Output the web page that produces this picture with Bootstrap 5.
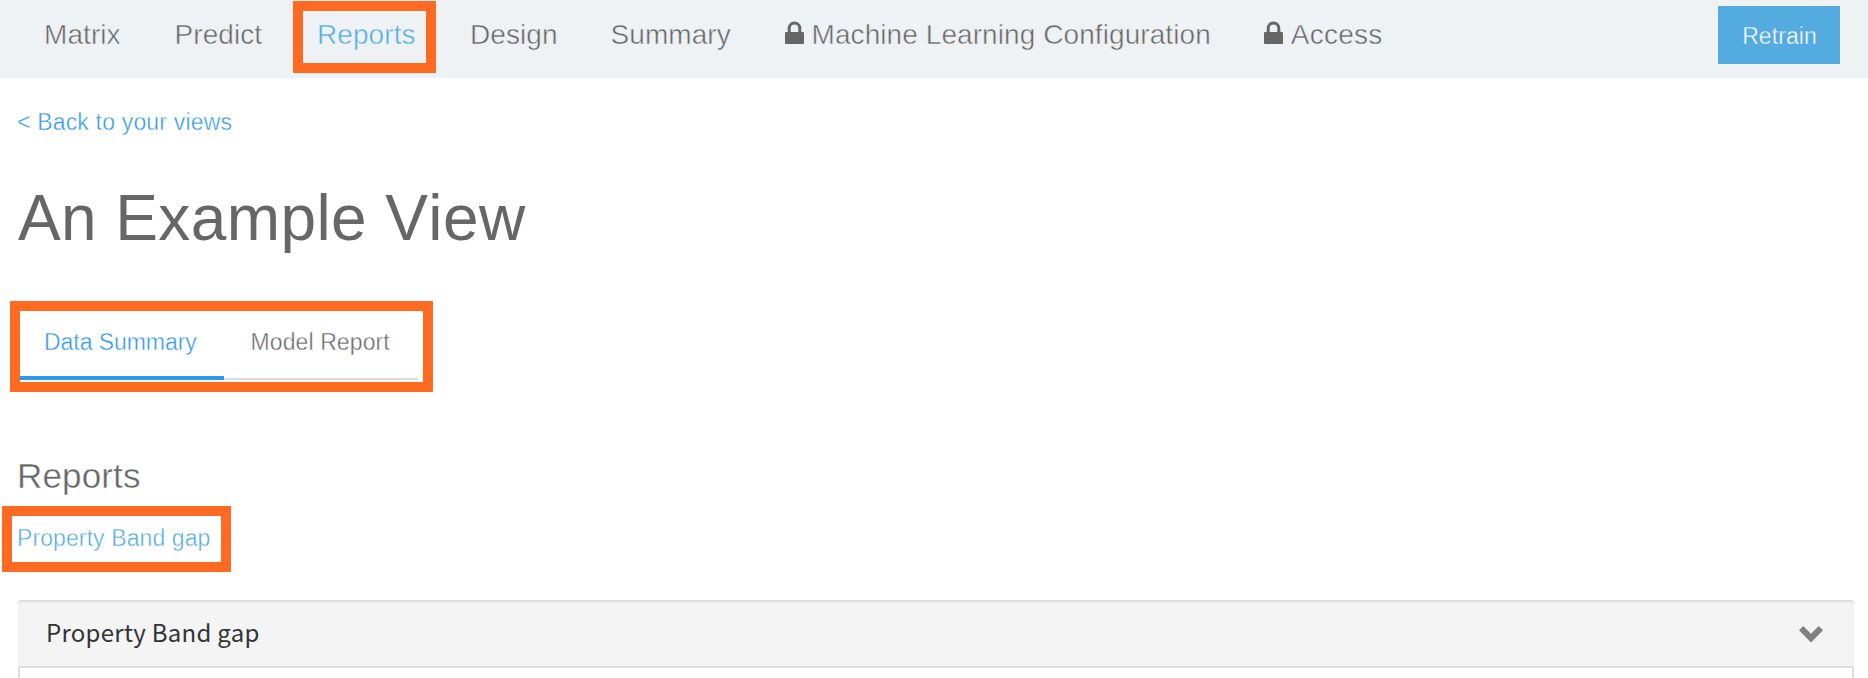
<!DOCTYPE html>
<html lang="en">
<head>
<meta charset="utf-8">
<title>An Example View</title>
<meta name="viewport" content="width=device-width, initial-scale=1">
<link href="https://cdn.jsdelivr.net/npm/bootstrap@5.3.0/dist/css/bootstrap.min.css" rel="stylesheet">
<style>
  :root { --ink: #666; --sky: #54abe0; --link: #2f97ec; --hot: #fe6a22; --bar: #eef2f5; }
  body { font-family: "Liberation Sans", Arial, sans-serif; color: var(--ink); height: 678px; overflow: hidden; background: #fff; }
  a { text-decoration: none; color: inherit; }
  /* a hairline in the surface colour slims the strokes to a light weight */
  .thin { -webkit-text-stroke: .4px #fff; font-size: 23px; line-height: 28px; white-space: nowrap; }
  .topbar { height: 78px; background: var(--bar); padding: 0 28px 0 44px; }
  .topbar .thin { -webkit-text-stroke: .5px var(--bar); font-size: 28px; line-height: 32px; letter-spacing: .08px; }
  .topbar .nav-item { padding-top: 19px; }
  .w1 { width: 130.5px; } .w2 { width: 142.5px; } .w3 { width: 153px; } .w4 { width: 140.5px; } .w5 { width: 174.5px; } .w6 { width: 479.3px; }
  .topbar .w7 { letter-spacing: .25px; }
  .lock { width: 19px; height: 23px; margin: 2px 7.5px 0 0; flex: none; }
  .sky { color: var(--sky); }
  .linkblue { color: var(--link); }
  .topbar .retrain.thin { width: 122px; height: 58px; margin-top: 6px; background: var(--sky); color: #fff; border-radius: 0; border: 0; padding: 2px 0 0 1px; -webkit-text-stroke: .4px var(--sky); font-size: 23px; line-height: 28px; }
  .callout { position: relative; }
  .callout::after { content: ""; position: absolute; border: 10px solid var(--hot); pointer-events: none; }
  .c-nav::after { left: -24px; top: 1px; width: 143px; height: 72px; }
  .c-tabs::after { left: -8px; top: 0; width: 423px; height: 91px; }
  .c-link::after { left: -15px; top: -18px; width: 229px; height: 66px; }
  .page { height: 600px; padding: 30px 14px 0 17px; }
  .back { letter-spacing: .18px; }
  h1.title { font-size: 64px; line-height: 72px; font-weight: 400; letter-spacing: .4px; margin: 46px 0 0 1px; font-kerning: none; }
  .tabs { width: 400px; height: 79px; margin: 47px 0 0 1px; }
  .tabs a { padding-top: 27px; height: 79px; }
  .tab-on { width: 206px; padding-left: 26px; letter-spacing: -.05px; border-bottom: 4px solid var(--link); }
  .tab-off { width: 194px; padding-left: 26.5px; border-bottom: 2px solid #ddd; letter-spacing: .1px; }
  h2.thin { font-size: 35px; line-height: 40px; font-weight: 400; letter-spacing: .15px; margin: 76px 0 0; }
  .jump { margin-top: 28px; letter-spacing: .1px; }
  .panel { margin: 48px 0 0 1px; border: 2px solid #ddd; border-bottom: 0; border-radius: 4px 4px 0 0; }
  .panel-top { height: 66px; margin: 0 -2px; padding: 0 31px 0 28px; background: #f4f4f4; border-bottom: 2px solid #ddd; font: 24px/60px "Noto Sans CJK SC", sans-serif; letter-spacing: .28px; color: #333; border-radius: 4px 4px 0 0; }
  .panel-top span { margin-top: -5px; }
  .panel-body { height: 10px; }
</style>
</head>
<body>
<nav class="topbar d-flex justify-content-between align-items-start">
  <ul class="nav flex-nowrap">
    <li class="nav-item thin w1"><a href="#">Matrix</a></li>
    <li class="nav-item thin w2"><a href="#">Predict</a></li>
    <li class="nav-item thin w3 callout c-nav"><a href="#" class="sky">Reports</a></li>
    <li class="nav-item thin w4"><a href="#">Design</a></li>
    <li class="nav-item thin w5"><a href="#">Summary</a></li>
    <li class="nav-item thin w6"><a href="#" class="d-flex"><svg class="lock" viewBox="0 0 19 23"><path d="M4.2 12V7.2a5.3 5.3 0 0 1 10.6 0V12" fill="none" stroke="#666" stroke-width="3"/><rect y="11" width="19" height="12" rx="1.3" fill="#666"/></svg>Machine Learning Configuration</a></li>
    <li class="nav-item thin w7"><a href="#" class="d-flex"><svg class="lock" viewBox="0 0 19 23"><path d="M4.2 12V7.2a5.3 5.3 0 0 1 10.6 0V12" fill="none" stroke="#666" stroke-width="3"/><rect y="11" width="19" height="12" rx="1.3" fill="#666"/></svg>Access</a></li>
  </ul>
  <button class="btn retrain thin" type="button">Retrain</button>
</nav>
<main class="page">
  <a href="#" class="thin linkblue back d-block">&lt; Back to your views</a>
  <h1 class="title">An Example View</h1>
  <div class="tabs d-flex callout c-tabs">
    <a href="#" class="thin linkblue tab-on">Data Summary</a>
    <a href="#" class="thin tab-off">Model Report</a>
  </div>
  <h2 class="thin">Reports</h2>
  <div class="jump callout c-link"><a href="#" class="thin sky d-block">Property Band gap</a></div>
  <section class="panel">
    <div class="panel-top d-flex justify-content-between align-items-center">
      <span>Property Band gap</span>
      <svg width="24" height="17" viewBox="0 0 24 17"><path d="M0 4.2 4.2 0 12 7.8 19.8 0 24 4.2 12 16.5z" fill="#808080"/></svg>
    </div>
    <div class="panel-body"></div>
  </section>
</main>
<script src="https://cdn.jsdelivr.net/npm/bootstrap@5.3.0/dist/js/bootstrap.bundle.min.js"></script>
</body>
</html>
